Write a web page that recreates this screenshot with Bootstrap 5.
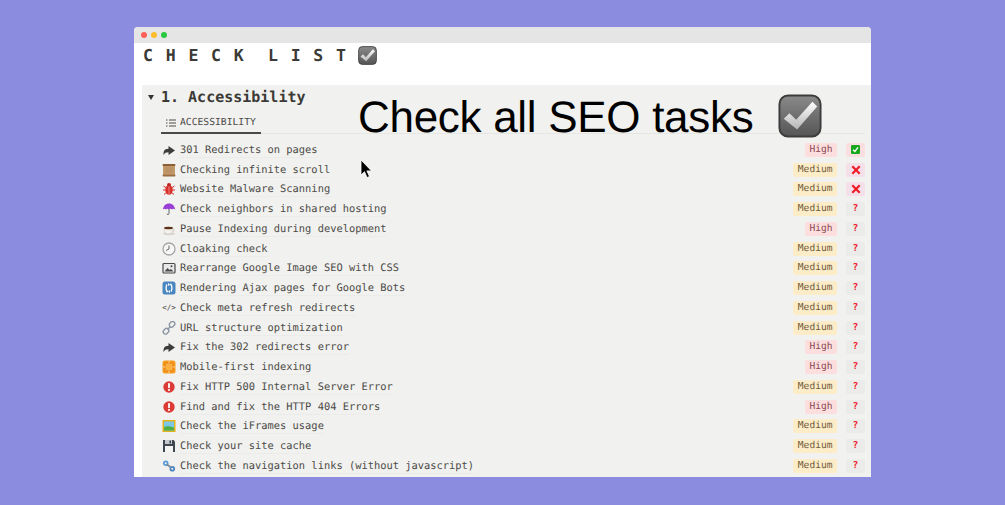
<!DOCTYPE html>
<html lang="en">
<head>
<meta charset="utf-8">
<title>Check list</title>
<link href="https://cdn.jsdelivr.net/npm/bootstrap@5.3.0/dist/css/bootstrap.min.css" rel="stylesheet">
<style>
html,body{height:100%;}
body{background:#8b8bdf;overflow:hidden;padding:27px 134px 28px;font-family:"DejaVu Sans Mono",monospace;color:#37352f;text-rendering:geometricPrecision;}
.win{height:450px;background:#fff;border-radius:4px 4px 0 0;overflow:hidden;position:relative;}
.tbar{height:16px;background:#e5e5e5;padding-left:7px;gap:4px;}
.dot{width:6px;height:6px;border-radius:50%;}
.head{height:42px;padding:3px 0 0 9px;gap:9px;align-items:flex-start;}
.ttl{font-size:16.5px;font-weight:700;letter-spacing:12.77px;word-spacing:-11.3px;line-height:18px;margin:1px -10px 0 0;color:#3b3a36;}
.sect{margin-left:8px;height:392px;background:#f1f1ef;padding-left:6px;}
.h2x{height:24px;gap:7px;}
.tri{width:0;height:0;border-left:3.5px solid transparent;border-right:3.5px solid transparent;border-top:5px solid #37352f;}
.h2t{font-size:15px;font-weight:700;line-height:22px;color:#3b3a36;}
.tabs{margin:0 6px 6px 13px;height:25px;border-bottom:1px solid #e6e6e3;}
.tabx{width:100px;height:25px;border-bottom:2px solid #4a4a46;padding:4px 0 0 5px;gap:4px;font-size:9.7px;color:#4c4b47;margin-bottom:-1px;}
.tabt{padding-top:2px;}
.rw{height:19.75px;padding:0 6px 0 14px;}
.ic{width:14px;height:14px;flex:none;margin-right:4px;display:block;}
.cd{width:14px;flex:none;margin-right:4px;font-size:7.5px;text-align:center;color:#4c4b47;}
.lb{font-size:10.4px;line-height:14px;color:#4c4b47;border-bottom:1px solid #ebebe9;padding-top:1px;}
.pri,.sta{height:14px;line-height:14px;font-size:9.6px;border-radius:2px;text-align:center;}
.pri{margin-left:auto;padding:0 4.5px;}
.phi{background:#fddede;color:#8b4a52;}
.pmd{background:#fdecc8;color:#6d5a3a;}
.sta{width:19px;margin-left:9px;display:flex;align-items:center;justify-content:center;font-weight:700;color:#f0202e;}
.sok{background:#fbdfe0;}
.sno{background:#f5dfe9;}
.squ{background:#ebebe9;}
.big{position:absolute;left:224px;top:64px;font-family:"Liberation Sans",sans-serif;font-size:44px;letter-spacing:-.3px;line-height:54px;color:#000;white-space:nowrap;}
.bigic{position:absolute;left:644px;top:67px;width:44px;height:44px;}
.curs{position:absolute;left:226px;top:132px;width:12px;height:20px;}
</style>
</head>
<body>
<svg width="0" height="0" class="position-absolute">
<defs>
<linearGradient id="gb" x1="0" y1="0" x2="0" y2="1"><stop offset="0" stop-color="#8a8a8a"/><stop offset="1" stop-color="#555"/></linearGradient>
<linearGradient id="gw" x1="0" y1="0" x2="0" y2="1"><stop offset="0" stop-color="#fff"/><stop offset="1" stop-color="#b5b5b5"/></linearGradient>
<symbol id="box" viewBox="0 0 46 46">
<rect x="1.5" y="1.5" width="43" height="43" rx="9" fill="url(#gb)" stroke="#3c3c3c" stroke-width="2"/>
<path d="M6 26l6-6 7 7L36 8l5 5-21 24z" fill="url(#gw)"/>
</symbol>
<symbol id="arr" viewBox="0 0 14 14"><path d="M1.500 12c0-4 .5-6 5-6.300V3l6.500 4.500L6.500 12V9.300C4 9.300 2.800 10 1.500 12z" fill="#3d3d3d"/></symbol>
<symbol id="scr" viewBox="0 0 14 14"><rect x="1" y="2" width="12" height="11" fill="#c49a6c"/><rect x="0.500" y="1" width="13" height="2" rx="1" fill="#8a5f38"/><rect x="0.500" y="11.500" width="13" height="2" rx="1" fill="#9c6f45"/><path d="M3 5h8M3 7h8M3 9h8" stroke="#ab8259" stroke-width=".6"/></symbol>
<symbol id="bug" viewBox="0 0 14 14"><path d="M1.500 4l3 2M12.500 4l-3 2M1 8h3M13 8h-3M2 12.500l3-2.500M12 12.500L9 10" stroke="#d9302c" stroke-width="1"/><ellipse cx="7" cy="8" rx="3.700" ry="4.800" fill="#d9302c"/><circle cx="7" cy="3" r="2" fill="#c0241f"/><path d="M7 4v8.500" stroke="#fbb" stroke-width=".6"/></symbol>
<symbol id="umb" viewBox="0 0 14 14"><path d="M.8 7.500C1.500 3.500 4 1.500 7 1.500s5.500 2 6.200 6c-1.200-1-2.300-1-3.100 0-1-1-2.200-1-3.100 0-1-1-2.100-1-3.100 0-.8-1-2-1-3.100 0z" fill="#9a3fd6"/><path d="M7 7v4.500c0 1.500-2 1.500-2 .2" stroke="#555" stroke-width=".9" fill="none"/></symbol>
<symbol id="cof" viewBox="0 0 14 14"><ellipse cx="7" cy="11.800" rx="6.300" ry="1.500" fill="#d8d4cf"/><path d="M2 6h9c0 3.500-1 6-4.500 6S2 9.500 2 6z" fill="#f4f1ec" stroke="#b9b4ad" stroke-width=".4"/><ellipse cx="6.500" cy="6" rx="4.500" ry="1.300" fill="#5b3418"/><path d="M10.800 7.200c2-.5 2 2-.6 2.300" stroke="#cfcac3" fill="none"/></symbol>
<symbol id="clk" viewBox="0 0 14 14"><circle cx="7" cy="7" r="6" fill="#f7f7f7" stroke="#a5a5a5" stroke-width="1.300"/><path d="M7 3.500V7L4 8.500" stroke="#555" stroke-width=".9" fill="none"/></symbol>
<symbol id="pic" viewBox="0 0 14 14"><rect x="1" y="2.500" width="12" height="9.500" rx="1" fill="#e8e8e8" stroke="#4a4a4a" stroke-width="1.200"/><path d="M2.500 10.500l3-3.500 2 2 1.500-1 2.500 2.500z" fill="#4a4a4a"/><circle cx="9.500" cy="5.300" r="1" fill="#4a4a4a"/></symbol>
<symbol id="ref" viewBox="0 0 14 14"><rect x=".5" y=".5" width="13" height="13" rx="2.500" fill="#4a86c0"/><path d="M5 3.500C3.800 5 3.800 9 5 10.500h1.200M9 10.500c1.200-1.500 1.200-5.500 0-7H7.800" stroke="#fff" stroke-width="1.300" fill="none"/><path d="M6 2l1.800 1.500L6 5zM8 9l-1.800 1.500L8 12z" fill="#fff"/></symbol>
<symbol id="lnk" viewBox="0 0 14 14"><g fill="none" stroke="#8b96a3" stroke-width="1.400"><rect x="7" y="1" width="6" height="4.500" rx="2.200" transform="rotate(-45 10 3.200)"/><rect x="1" y="8" width="6" height="4.500" rx="2.200" transform="rotate(-45 4 10.200)"/><path d="M5.500 8.500l3-3"/></g></symbol>
<symbol id="org" viewBox="0 0 14 14"><rect x=".5" y=".5" width="13" height="13" rx="2.500" fill="#f59a1e"/><rect x="3" y="3" width="8" height="8" rx="1.500" fill="#fbb040" stroke="#e0700a" stroke-width=".8"/><path d="M7 .5v3M7 10.500v3M.5 7h3M10.500 7h3" stroke="#fdd28a" stroke-width="1"/></symbol>
<symbol id="err" viewBox="0 0 14 14"><circle cx="7" cy="7" r="5.700" fill="#dc3a34"/><rect x="6.100" y="3" width="1.800" height="5.200" rx=".8" fill="#fff"/><circle cx="7" cy="10" r="1.100" fill="#fff"/></symbol>
<symbol id="frm" viewBox="0 0 14 14"><rect x=".5" y="1" width="13" height="12" fill="#e5b21a"/><rect x="2" y="2.500" width="10" height="9" fill="#7cc7e8"/><path d="M2 11.500V8.500c3-2 5-1 10 0v3z" fill="#4faf46"/></symbol>
<symbol id="flp" viewBox="0 0 14 14"><path d="M1 1h10.500L13 2.500V13H1z" fill="#3f4650"/><rect x="3" y="1" width="7" height="4" fill="#c5cad0"/><rect x="7.500" y="1.500" width="1.500" height="3" fill="#3f4650"/><rect x="3" y="7" width="8" height="6" fill="#f3f3f3"/></symbol>
<symbol id="bln" viewBox="0 0 14 14"><g fill="none" stroke-width="1.800"><circle cx="3.700" cy="4.300" r="1.900" stroke="#5a9bd8"/><circle cx="10.300" cy="9.800" r="1.900" stroke="#4a84c0"/><path d="M5 5.500l4 3" stroke="#7f8c99"/></g></symbol>
<symbol id="grn" viewBox="0 0 10 10"><rect width="10" height="10" rx="1.500" fill="#18a81e"/><path d="M2.300 5.200l2 2 3.500-4.500" stroke="#fff" stroke-width="1.400" fill="none"/></symbol>
<symbol id="rx" viewBox="0 0 10 10"><path d="M1.300 1.300l7.400 7.400M8.700 1.300L1.300 8.700" stroke="#ee1c25" stroke-width="2.200"/></symbol>
</defs>
</svg>

<div class="win">
  <div class="tbar d-flex align-items-center">
    <span class="dot" style="background:#ff5f57"></span><span class="dot" style="background:#febc2e"></span><span class="dot" style="background:#28c840"></span>
  </div>
  <div class="head d-flex">
    <div class="ttl">CHECK LIST</div>
    <svg width="19" height="19"><use href="#box"/></svg>
  </div>
  <div class="sect">
    <div class="h2x d-flex align-items-center">
      <span class="tri"></span><span class="h2t">1. Accessibility</span>
    </div>
    <div class="tabs">
      <div class="tabx d-flex align-items-center">
        <svg width="10" height="8" viewBox="0 0 10 8"><path d="M0 1h1.500M3 1h7M0 4h1.500M3 4h7M0 7h1.500M3 7h7" stroke="#4c4b47"/></svg>
        <span class="tabt">ACCESSIBILITY</span>
      </div>
    </div>
    <div class="rw d-flex align-items-center"><svg class="ic"><use href="#arr"/></svg><span class="lb">301 Redirects on pages</span><span class="pri phi">High</span><span class="sta sok"><svg width="9" height="9"><use href="#grn"/></svg></span></div>
    <div class="rw d-flex align-items-center"><svg class="ic"><use href="#scr"/></svg><span class="lb">Checking infinite scroll</span><span class="pri pmd">Medium</span><span class="sta sno"><svg width="10" height="10"><use href="#rx"/></svg></span></div>
    <div class="rw d-flex align-items-center"><svg class="ic"><use href="#bug"/></svg><span class="lb">Website Malware Scanning</span><span class="pri pmd">Medium</span><span class="sta sno"><svg width="10" height="10"><use href="#rx"/></svg></span></div>
    <div class="rw d-flex align-items-center"><svg class="ic"><use href="#umb"/></svg><span class="lb">Check neighbors in shared hosting</span><span class="pri pmd">Medium</span><span class="sta squ">?</span></div>
    <div class="rw d-flex align-items-center"><svg class="ic"><use href="#cof"/></svg><span class="lb">Pause Indexing during development</span><span class="pri phi">High</span><span class="sta squ">?</span></div>
    <div class="rw d-flex align-items-center"><svg class="ic"><use href="#clk"/></svg><span class="lb">Cloaking check</span><span class="pri pmd">Medium</span><span class="sta squ">?</span></div>
    <div class="rw d-flex align-items-center"><svg class="ic"><use href="#pic"/></svg><span class="lb">Rearrange Google Image SEO with CSS</span><span class="pri pmd">Medium</span><span class="sta squ">?</span></div>
    <div class="rw d-flex align-items-center"><svg class="ic"><use href="#ref"/></svg><span class="lb">Rendering Ajax pages for Google Bots</span><span class="pri pmd">Medium</span><span class="sta squ">?</span></div>
    <div class="rw d-flex align-items-center"><span class="cd">&lt;/&gt;</span><span class="lb">Check meta refresh redirects</span><span class="pri pmd">Medium</span><span class="sta squ">?</span></div>
    <div class="rw d-flex align-items-center"><svg class="ic"><use href="#lnk"/></svg><span class="lb">URL structure optimization</span><span class="pri pmd">Medium</span><span class="sta squ">?</span></div>
    <div class="rw d-flex align-items-center"><svg class="ic"><use href="#arr"/></svg><span class="lb">Fix the 302 redirects error</span><span class="pri phi">High</span><span class="sta squ">?</span></div>
    <div class="rw d-flex align-items-center"><svg class="ic"><use href="#org"/></svg><span class="lb">Mobile-first indexing</span><span class="pri phi">High</span><span class="sta squ">?</span></div>
    <div class="rw d-flex align-items-center"><svg class="ic"><use href="#err"/></svg><span class="lb">Fix HTTP 500 Internal Server Error</span><span class="pri pmd">Medium</span><span class="sta squ">?</span></div>
    <div class="rw d-flex align-items-center"><svg class="ic"><use href="#err"/></svg><span class="lb">Find and fix the HTTP 404 Errors</span><span class="pri phi">High</span><span class="sta squ">?</span></div>
    <div class="rw d-flex align-items-center"><svg class="ic"><use href="#frm"/></svg><span class="lb">Check the iFrames usage</span><span class="pri pmd">Medium</span><span class="sta squ">?</span></div>
    <div class="rw d-flex align-items-center"><svg class="ic"><use href="#flp"/></svg><span class="lb">Check your site cache</span><span class="pri pmd">Medium</span><span class="sta squ">?</span></div>
    <div class="rw d-flex align-items-center"><svg class="ic"><use href="#bln"/></svg><span class="lb">Check the navigation links (without javascript)</span><span class="pri pmd">Medium</span><span class="sta squ">?</span></div>
  </div>
  <div class="big">Check all SEO tasks</div>
  <svg class="bigic"><use href="#box"/></svg>
  <svg class="curs" viewBox="0 0 12 20"><path d="M1 1v15l3.500-3.300L7 18.500l2.500-1-2.600-5.600H11.500z" fill="#000" stroke="#fff" stroke-width=".8"/></svg>
</div>
<script src="https://cdn.jsdelivr.net/npm/bootstrap@5.3.0/dist/js/bootstrap.bundle.min.js"></script>
</body>
</html>
